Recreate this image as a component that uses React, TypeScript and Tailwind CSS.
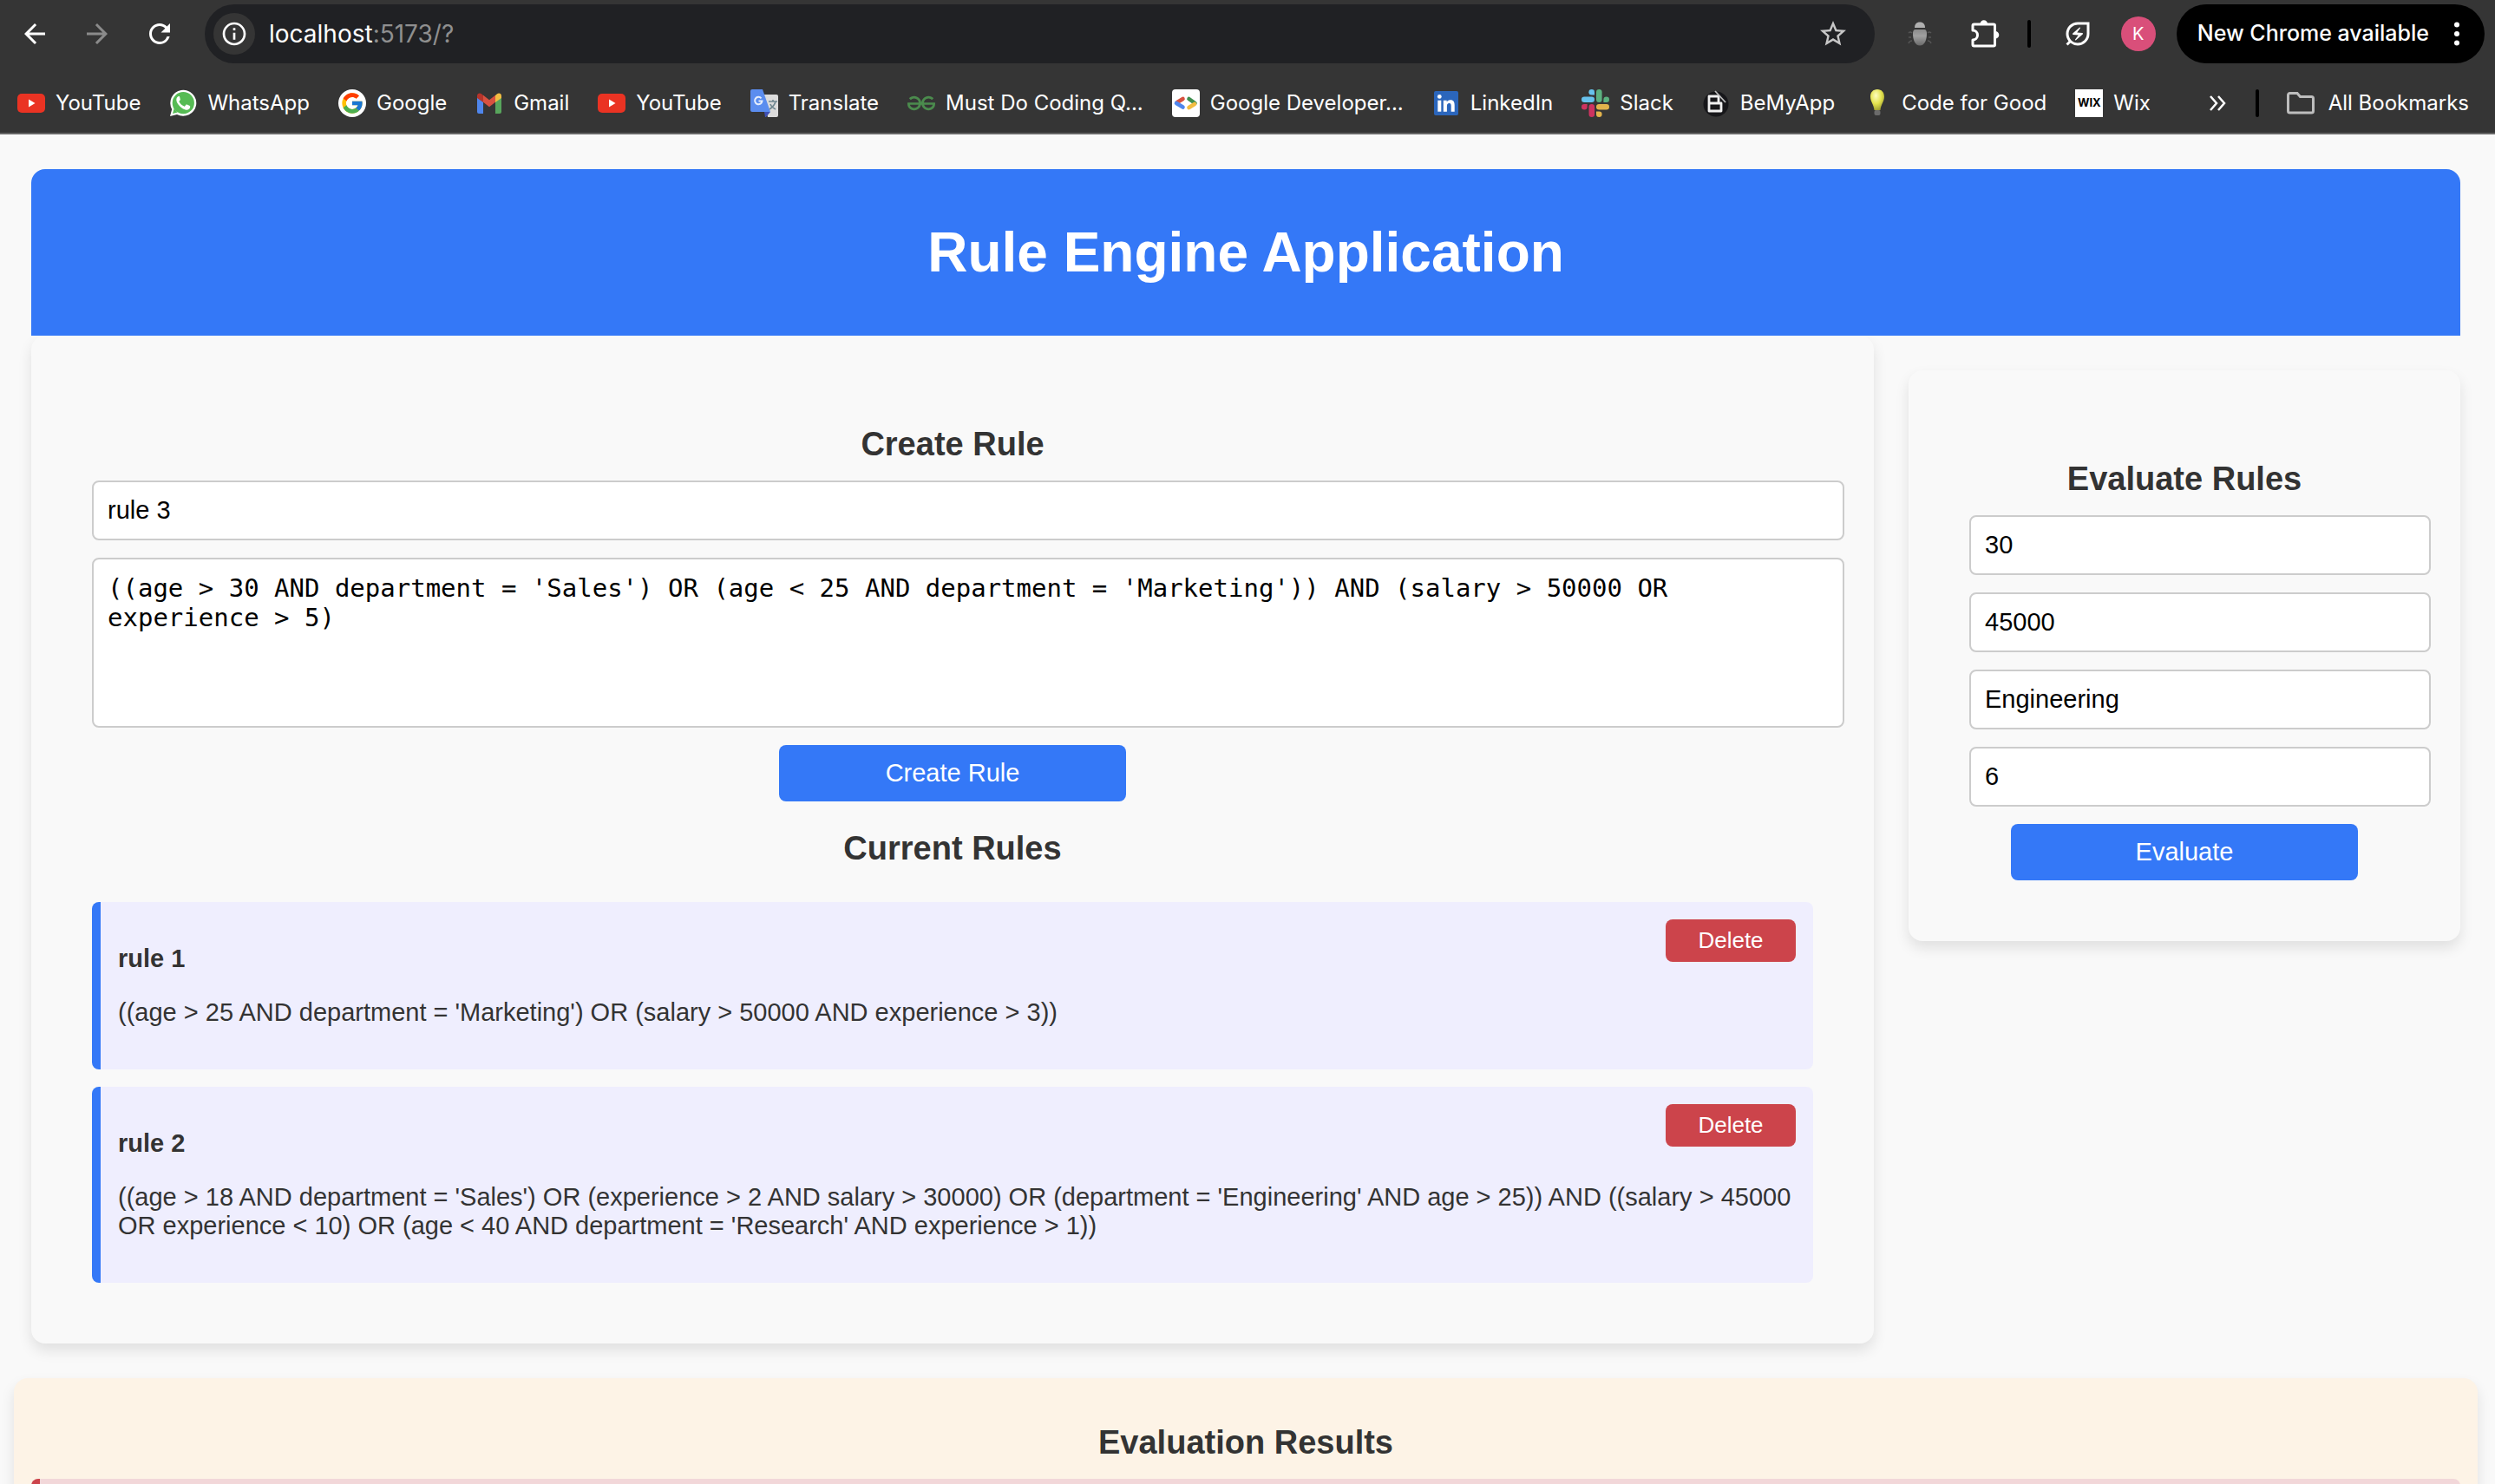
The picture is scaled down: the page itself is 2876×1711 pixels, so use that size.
import { useState, type ReactNode } from "react";
import {
  MdArrowBack,
  MdArrowForward,
  MdRefresh,
  MdInfoOutline,
  MdStarBorder,
  MdOutlineEnergySavingsLeaf,
} from "react-icons/md";
import { FcGoogle } from "react-icons/fc";
import { SiGeeksforgeeks } from "react-icons/si";

/* ---------- bookmark icons (32 x 32) ---------- */

function Icon({ children }: { children: ReactNode }) {
  return (
    <svg viewBox="0 0 32 32" className="size-8 shrink-0" aria-hidden="true">
      {children}
    </svg>
  );
}

const YouTubeIcon = () => (
  <Icon>
    <rect x="0" y="5" width="32" height="22" rx="5" fill="#ea3323" />
    <path d="M13 11.500v9l7.500-4.500z" fill="#fff" />
  </Icon>
);

const WhatsAppIcon = () => (
  <Icon>
    <path d="M1 31l2.200-7.900A15 15 0 1 1 9 28.900z" fill="#fff" />
    <circle cx="16.300" cy="15.700" r="12.600" fill="#56bb54" />
    <path d="M4 28l1.600-5.800 4.200 4.200z" fill="#56bb54" />
    <path
      d="M12.200 8.900c-.4-.8-.7-.8-1.100-.8-.9 0-2.800 1.200-2.800 3.900 0 2.700 2 5.200 2.900 6.300 1 1.200 3.700 4.300 7.500 5.300 2.900.8 5.300-.9 5.500-3.300.1-.7 0-1-.4-1.200l-3.300-1.600c-.4-.2-.8-.2-1.100.3l-1.300 1.600c-.3.3-.6.3-1 .1-2.400-1-4.300-2.700-5.600-5-.2-.4 0-.7.200-.9.700-.7 1.300-1.400 1.100-2z"
      fill="#fff"
    />
  </Icon>
);

const GoogleIcon = () => (
  <span className="flex size-8 shrink-0 items-center justify-center rounded-full bg-white">
    <FcGoogle className="size-7" />
  </span>
);

const GmailIcon = () => (
  <Icon>
    <path d="M2 8v18a2 2 0 0 0 2 2h5V13z" fill="#4f86ec" />
    <path d="M23 13v15h5a2 2 0 0 0 2-2V8z" fill="#58a55c" />
    <path d="M23 7v8l7-5V7.500c0-2.800-3-3.800-5-2.200z" fill="#f2bd42" />
    <path d="M9 7v8L2 10V7.500c0-2.800 3-3.800 5-2.200z" fill="#b5342b" />
    <path d="M9 6.800l7 5.400 7-5.400v8l-7 5.400-7-5.400z" fill="#d85140" />
  </Icon>
);

const TranslateIcon = () => (
  <Icon>
    <path d="M14 6h16a2 2 0 0 1 2 2v22a2 2 0 0 1-2 2H20z" fill="#dcdcdc" />
    <path d="M16 26h7l-5 6h-1z" fill="#3f51b5" />
    <path d="M2 0h12l9 26H2a2 2 0 0 1-2-2V2a2 2 0 0 1 2-2z" fill="#5b8def" />
    <path d="M21 14h10M26 12v2M29 14c-1 4-4 7-7 9M23 17c1 3 4 5 6 6" stroke="#6f8790" strokeWidth="1.600" fill="none" />
    <path d="M12.500 10.300a4.200 4.200 0 1 0 1 3.200H9.500" stroke="#e6eefc" strokeWidth="2" fill="none" />
  </Icon>
);

const GeeksIcon = () => (
  <span className="flex size-8 shrink-0 items-center justify-center">
    <SiGeeksforgeeks className="size-8 text-[#4b8b4d]" />
  </span>
);

const DevelopersIcon = () => (
  <Icon>
    <rect width="32" height="32" rx="4" fill="#fff" />
    <g strokeWidth="4.600" strokeLinecap="round" fill="none">
      <path d="M12.500 11L6 15" stroke="#d85140" />
      <path d="M5 16l7.500 4.500" stroke="#4f86ec" />
      <path d="M19.500 11l7 5" stroke="#3f8f4f" />
      <path d="M26 17l-6.500 4" stroke="#f2bd42" />
    </g>
  </Icon>
);

const LinkedInIcon = () => (
  <Icon>
    <rect x="2" y="2" width="28" height="28" rx="2" fill="#2b66bc" />
    <rect x="6.300" y="12.700" width="4" height="13" fill="#fff" />
    <circle cx="8.300" cy="8.400" r="2.400" fill="#fff" />
    <path
      d="M12.800 12.700h3.900v1.800c.6-1.100 2-2.200 4-2.200 4.200 0 5 2.700 5 6.300v7.100h-4v-6.300c0-1.600 0-3.500-2.100-3.500s-2.700 1.600-2.700 3.400v6.400h-4.100z"
      fill="#fff"
    />
  </Icon>
);

const SlackIcon = () => (
  <Icon>
    <g fill="#67c2ed">
      <rect x="0" y="8.500" width="15" height="6.600" rx="3.300" />
      <path d="M15 6.600h-3.300A3.300 3.300 0 1 1 15 3.300z" />
    </g>
    <g fill="#5cb180">
      <rect x="17" y="0" width="6.600" height="15" rx="3.300" />
      <path d="M25.400 15v-3.300a3.300 3.300 0 1 1 3.300 3.300z" />
    </g>
    <g fill="#e2b34c">
      <rect x="17" y="17" width="15" height="6.600" rx="3.300" />
      <path d="M17 25.400h3.300a3.300 3.300 0 1 1-3.300 3.300z" />
    </g>
    <g fill="#cd3360">
      <rect x="8.500" y="17" width="6.600" height="15" rx="3.300" />
      <path d="M6.600 17v3.300A3.300 3.300 0 1 1 3.300 17z" />
    </g>
  </Icon>
);

const BeMyAppIcon = () => (
  <Icon>
    <circle cx="16" cy="17" r="14.500" fill="#17171a" />
    <path
      d="M8 8h11v8H8zM8 16h14v9H8z"
      stroke="#f0f0f0"
      strokeWidth="2.800"
      strokeLinejoin="round"
      fill="none"
    />
    <path d="M15 2l12 13" stroke="#bdbdbd" strokeWidth="1.800" />
  </Icon>
);

const BulbIcon = () => (
  <Icon>
    <defs>
      <radialGradient id="bulb" cx="0.4" cy="0.3" r="0.8">
        <stop offset="0" stopColor="#fdfdc0" />
        <stop offset="0.5" stopColor="#e4e34e" />
        <stop offset="1" stopColor="#8f8f2a" />
      </radialGradient>
    </defs>
    <path d="M16 0c5 0 8 3.500 8 8.500 0 6-4 9-4.500 15.500h-7C12 17.500 8 14.500 8 8.500 8 3.500 11 0 16 0z" fill="url(#bulb)" />
    <rect x="12.500" y="24" width="7" height="6" rx="2" fill="#6b6b6b" />
  </Icon>
);

const WixIcon = () => (
  <span className="flex size-8 shrink-0 items-center justify-center bg-white font-['Inter'] text-[13px] font-bold text-black">
    WIX
  </span>
);

const BugIcon = () => (
  <svg viewBox="0 0 32 32" className="size-8" aria-hidden="true">
    <defs>
      <linearGradient id="bug" x1="0" y1="0" x2="0" y2="1">
        <stop offset="0" stopColor="#8a8a8a" />
        <stop offset="0.4" stopColor="#a0a0a0" />
        <stop offset="1" stopColor="#6a6a6a" />
      </linearGradient>
    </defs>
    <path d="M10 9c0-4 2-6.500 6-6.500s6 2.500 6 6.500z" fill="#b0b0b0" />
    <path d="M11 11h10c2.500 0 3 2 3 5 0 7-2.500 13.500-8 13.500S8 23 8 16c0-3 .5-5 3-5z" fill="url(#bug)" />
    <path d="M3 15q2-2 4 0M3 20h3M3 27q1-3 4-3M29 15q-2-2-4 0M29 20h-3M29 27q-1-3-4-3" stroke="#555" strokeWidth="1.500" fill="none" />
  </svg>
);

const PuzzleIcon = () => (
  <svg viewBox="0 0 36 36" className="size-9" fill="none" aria-hidden="true">
    <path
      d="M5 8.500a1.500 1.500 0 0 1 1.500-1.500H29a1.500 1.500 0 0 1 1.500 1.500v22A1.500 1.500 0 0 1 29 32H6.500A1.500 1.500 0 0 1 5 30.500V25a5.500 5.500 0 0 0 0-11z"
      stroke="#fff"
      strokeWidth="3"
      strokeLinejoin="round"
    />
    <path d="M13.500 6.500a4.300 4.300 0 0 1 8.600 0zM31 15a4.300 4.300 0 0 1 0 8.600z" fill="#fff" />
  </svg>
);

type Bookmark = { label: string; icon: () => ReactNode };

const bookmarks: Bookmark[] = [
  { label: "YouTube", icon: YouTubeIcon },
  { label: "WhatsApp", icon: WhatsAppIcon },
  { label: "Google", icon: GoogleIcon },
  { label: "Gmail", icon: GmailIcon },
  { label: "YouTube", icon: YouTubeIcon },
  { label: "Translate", icon: TranslateIcon },
  { label: "Must Do Coding Q...", icon: GeeksIcon },
  { label: "Google Developer...", icon: DevelopersIcon },
  { label: "LinkedIn", icon: LinkedInIcon },
  { label: "Slack", icon: SlackIcon },
  { label: "BeMyApp", icon: BeMyAppIcon },
  { label: "Code for Good", icon: BulbIcon },
  { label: "Wix", icon: WixIcon },
];

/* ---------- browser bars ---------- */

function BrowserBar() {
  return (
    <header className="shrink-0 border-b-2 border-[#666] bg-[#353535] font-['Inter',sans-serif] text-white">
      <div className="flex items-center pt-[5px] pr-3 pl-[22px]">
        <nav className="flex gap-9">
          <button aria-label="Back">
            <MdArrowBack className="size-9" />
          </button>
          <button aria-label="Forward" className="text-[#8b8b8b]">
            <MdArrowForward className="size-9" />
          </button>
          <button aria-label="Reload">
            <MdRefresh className="size-9" />
          </button>
        </nav>
        <div className="ml-[34px] flex h-[68px] flex-1 items-center rounded-full bg-[#202124] pr-[30px] pl-[10px]">
          <button
            aria-label="Site information"
            className="flex size-12 items-center justify-center rounded-full bg-[#353535]"
          >
            <MdInfoOutline className="size-8" />
          </button>
          <p className="ml-4 flex-1 text-[28px]">
            localhost<span className="text-[#8f8f8f]">:5173/?</span>
          </p>
          <button aria-label="Bookmark this tab" className="text-[#c7c7c7]">
            <MdStarBorder className="size-9" />
          </button>
        </div>
        <div className="ml-9 flex items-center">
          <button aria-label="Bug extension">
            <BugIcon />
          </button>
          <button aria-label="Extensions" className="ml-10">
            <PuzzleIcon />
          </button>
          <span className="ml-8 h-8 w-1 rounded-full bg-black" />
          <button aria-label="Energy saver" className="ml-9">
            <MdOutlineEnergySavingsLeaf className="size-9" />
          </button>
          <button className="ml-8 size-10 rounded-full bg-[#d94f7a] text-[20px]">K</button>
          <button className="ml-6 flex h-[68px] items-center gap-7 rounded-full bg-black pr-7 pl-6 text-[25px] font-medium">
            New Chrome available
            <svg viewBox="0 0 8 28" className="h-7 w-2" fill="#fff" aria-hidden="true">
              <circle cx="4" cy="3.500" r="3" />
              <circle cx="4" cy="14" r="3" />
              <circle cx="4" cy="24.500" r="3" />
            </svg>
          </button>
        </div>
      </div>
      <nav className="flex h-20 items-center pt-3 pr-[30px] pl-5 text-[24px]">
        <ul className="flex flex-1 gap-[33px]">
          {bookmarks.map(({ label, icon: BookmarkIcon }, i) => (
            <li key={i}>
              <a href="#" className="flex items-center gap-3 whitespace-nowrap">
                <BookmarkIcon />
                {label}
              </a>
            </li>
          ))}
        </ul>
        <button aria-label="More bookmarks">
          <svg viewBox="0 0 20 18" className="h-[18px] w-5" fill="none" stroke="#fff" strokeWidth="2.500" aria-hidden="true">
            <path d="M2 1l7 8-7 8M11 1l7 8-7 8" />
          </svg>
        </button>
        <span className="ml-[34px] h-8 w-1 rounded-full bg-black" />
        <a href="#" className="ml-8 flex items-center gap-4 whitespace-nowrap">
          <svg viewBox="0 0 32 26" className="h-[26px] w-8" fill="none" stroke="#bdbdbd" strokeWidth="3" aria-hidden="true">
            <path d="M1.500 3.500a2 2 0 0 1 2-2H12l3.500 4h13a2 2 0 0 1 2 2V22a2 2 0 0 1-2 2h-25a2 2 0 0 1-2-2z" />
          </svg>
          All Bookmarks
        </a>
      </nav>
    </header>
  );
}

/* ---------- page ---------- */

const fieldClass =
  "-mr-9 mb-5 rounded-lg border-2 border-[#ccc] bg-white p-4 text-[29px] text-black outline-none";

const panelClass = "rounded-2xl bg-[#f9f9f9] px-[70px] pt-[71px] pb-[70px] shadow-[0_8px_16px_rgba(0,0,0,0.1)]";

function SectionTitle({ children }: { children: ReactNode }) {
  return <h2 className="mt-8 text-center text-[38px] leading-[44px] font-bold">{children}</h2>;
}

function PrimaryButton({ children }: { children: ReactNode }) {
  return (
    <button type="submit" className="w-[400px] self-center rounded-lg bg-[#3478f7] p-4 text-[29px] leading-[33px] text-white">
      {children}
    </button>
  );
}

type Rule = { name: string; expression: string };

const initialRules: Rule[] = [
  {
    name: "rule 1",
    expression: "((age > 25 AND department = 'Marketing') OR (salary > 50000 AND experience > 3))",
  },
  {
    name: "rule 2",
    expression:
      "((age > 18 AND department = 'Sales') OR (experience > 2 AND salary > 30000) OR (department = 'Engineering' AND age > 25)) AND ((salary > 45000 OR experience < 10) OR (age < 40 AND department = 'Research' AND experience > 1))",
  },
];

function RuleCard({ rule, onDelete }: { rule: Rule; onDelete: () => void }) {
  return (
    <li className="relative rounded-lg border-l-[10px] border-[#3478f7] bg-[#efeefe] px-5 py-[49px] text-[29px] leading-[33px]">
      <p className="font-bold">{rule.name}</p>
      <p className="mt-[29px]">{rule.expression}</p>
      <button
        onClick={onDelete}
        className="absolute top-5 right-5 w-[150px] rounded-lg bg-[#cc444b] py-2.5 text-[26px] leading-[29px] text-white"
      >
        Delete
      </button>
    </li>
  );
}

const evaluationFields = [
  { label: "Age", value: "30" },
  { label: "Salary", value: "45000" },
  { label: "Department", value: "Engineering" },
  { label: "Experience", value: "6" },
];

export default function App() {
  const [rules, setRules] = useState(initialRules);

  return (
    <div className="flex h-screen flex-col overflow-hidden bg-[#f9f9f9] font-['Liberation_Sans',Arial,sans-serif] text-[#333]">
      <BrowserBar />
      <div className="min-h-0 flex-1 overflow-hidden pt-10 pr-5 pl-4">
        <div className="px-5">
          <div className="relative rounded-t-2xl bg-[#3478f7] py-[58px] text-center">
            <h1 className="text-[64px] leading-[76px] font-bold text-white">Rule Engine Application</h1>
          </div>
          <main className="flex items-start gap-10">
            <section className={`${panelClass} min-w-0 flex-1`}>
              <form className="flex flex-col" onSubmit={(e) => e.preventDefault()}>
                <SectionTitle>Create Rule</SectionTitle>
                <input
                  aria-label="Rule name"
                  defaultValue="rule 3"
                  className={`${fieldClass} mt-5 leading-[33px]`}
                />
                <textarea
                  aria-label="Rule expression"
                  spellCheck={false}
                  defaultValue="((age > 30 AND department = 'Sales') OR (age < 25 AND department = 'Marketing')) AND (salary > 50000 OR experience > 5)"
                  className={`${fieldClass} h-[196px] resize-none font-['DejaVu_Sans_Mono',monospace] leading-[34px]`}
                />
                <PrimaryButton>Create Rule</PrimaryButton>
              </form>
              <SectionTitle>Current Rules</SectionTitle>
              <ul className="mt-10 flex flex-col gap-5">
                {rules.map((rule) => (
                  <RuleCard
                    key={rule.name}
                    rule={rule}
                    onDelete={() => setRules(rules.filter((r) => r !== rule))}
                  />
                ))}
              </ul>
            </section>
            <aside className={`${panelClass} mt-10 w-[636px]`}>
              <form className="flex flex-col" onSubmit={(e) => e.preventDefault()}>
                <SectionTitle>Evaluate Rules</SectionTitle>
                <div className="mt-5 flex flex-col">
                  {evaluationFields.map(({ label, value }) => (
                    <input
                      key={label}
                      aria-label={label}
                      defaultValue={value}
                      className={`${fieldClass} leading-[33px]`}
                    />
                  ))}
                </div>
                <PrimaryButton>Evaluate</PrimaryButton>
              </form>
            </aside>
          </main>
        </div>
        <section className="mt-10 rounded-2xl bg-[#fdf3e6] p-5 shadow-[0_8px_16px_rgba(0,0,0,0.1)]">
          <SectionTitle>Evaluation Results</SectionTitle>
          <div className="mt-5 h-24 rounded-lg border-l-[10px] border-[#cc444b] bg-[#f2d7d9]" />
        </section>
      </div>
    </div>
  );
}
